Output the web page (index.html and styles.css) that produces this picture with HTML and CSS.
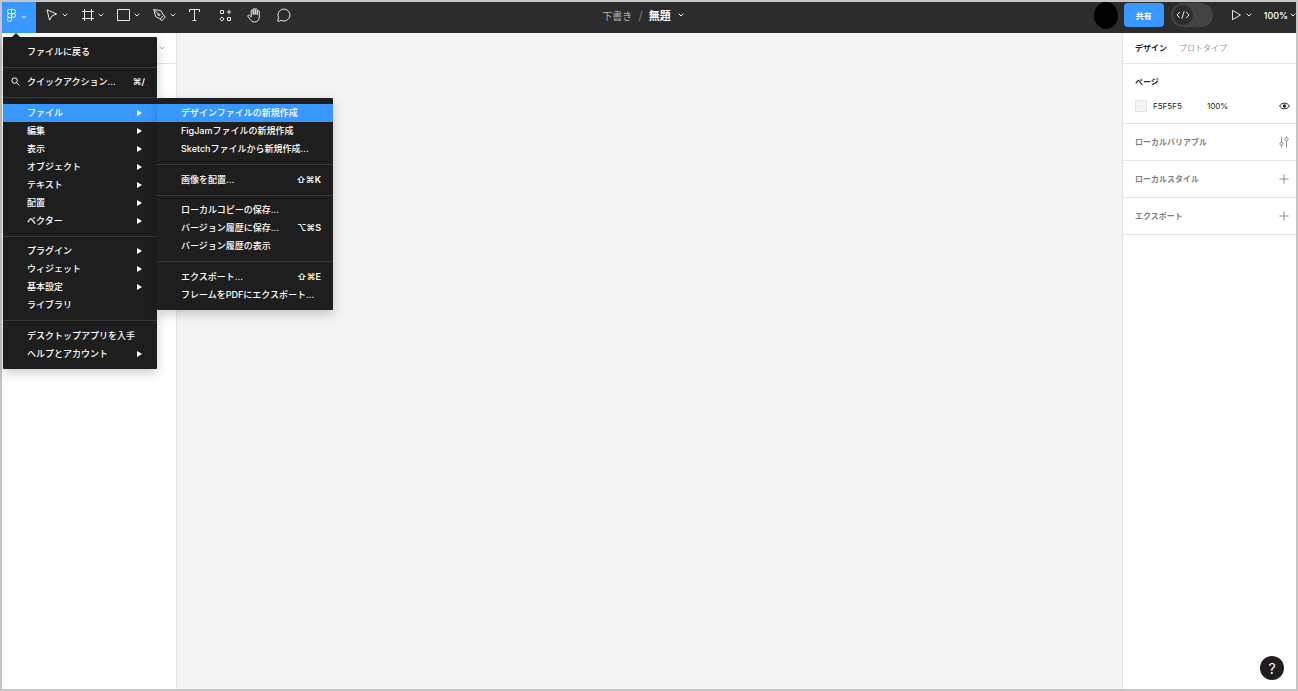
FILE: index.html
```html
<!DOCTYPE html>
<html lang="ja">
<head>
    <meta charset="UTF-8">
    <meta name="viewport" content="width=device-width, initial-scale=1.0">
    <title>無題 – Figma</title>
    <link rel="stylesheet" href="styles.css">
</head>
<body>

    <!-- Shared chevron -->
    <svg class="defs" aria-hidden="true">
        <symbol id="chevron" viewBox="0 0 6 4"><path d="M0.7 0.7 L3 3 L5.3 0.7" fill="none" stroke="currentColor"/></symbol>
        <symbol id="plus" viewBox="0 0 10 10"><path d="M5 0.5V9.5M0.5 5H9.5" fill="none" stroke="currentColor" stroke-width="0.9"/></symbol>
    </svg>

    <header class="toolbar">
        <div class="tools">
            <button class="logo" aria-label="メインメニュー" aria-expanded="true">
                <svg width="9" height="13" viewBox="0 0 9 13" fill="none" stroke="currentColor" stroke-width="0.9">
                    <path d="M4.5 0.5H2.4a1.9 1.9 0 0 0 0 4h2.1zM4.5 0.5h2.1a1.9 1.9 0 0 1 0 4H4.5zM4.5 4.5H2.4a1.9 1.9 0 0 0 0 4h2.1zM4.5 8.5H2.4a2 2 0 1 0 2.1 2z"/>
                    <circle cx="6.5" cy="6.5" r="2"/>
                </svg>
                <svg class="chevron" width="6" height="4"><use href="#chevron"/></svg>
            </button>
            <button class="tool" aria-label="移動">
                <svg width="16" height="16" viewBox="0 0 16 16" fill="none" stroke="currentColor"><path d="M3 2.8 L12.6 7 L8.2 8.8 L5.6 13.2 Z" stroke-linejoin="round"/></svg>
                <svg class="chevron" width="6" height="4"><use href="#chevron"/></svg>
            </button>
            <button class="tool" aria-label="フレーム">
                <svg width="16" height="16" viewBox="0 0 16 16" fill="none" stroke="currentColor"><path d="M4.5 2v12M11.5 2v12M2 4.5h12M2 11.5h12"/></svg>
                <svg class="chevron" width="6" height="4"><use href="#chevron"/></svg>
            </button>
            <button class="tool" aria-label="長方形">
                <svg width="16" height="16" viewBox="0 0 16 16" fill="none" stroke="currentColor"><path d="M1.5 2.5h12v11h-12z"/></svg>
                <svg class="chevron" width="6" height="4"><use href="#chevron"/></svg>
            </button>
            <button class="tool" aria-label="ペン">
                <svg width="16" height="16" viewBox="0 0 16 16" fill="none" stroke="currentColor" stroke-linejoin="round"><path d="M1.8 2.5 L8.8 3.6 L11.6 8.4 L8.2 12 L3.6 9.6 Z M1.8 2.5 L6.4 7.2 M8.2 12 l1.5 1.8 L13.4 9.8 L11.6 8.4"/><circle cx="7" cy="7.8" r="1"/></svg>
                <svg class="chevron" width="6" height="4"><use href="#chevron"/></svg>
            </button>
            <div class="single-tools">
                <button aria-label="テキスト">
                    <svg width="16" height="16" viewBox="0 0 16 16" fill="none" stroke="currentColor"><path d="M3.5 5V2.5h10V5M8.5 2.5v11M6.5 13.5h4"/></svg>
                </button>
                <button aria-label="リソース">
                    <svg width="16" height="16" viewBox="0 0 16 16" fill="none" stroke="currentColor"><path d="M4.5 3.5h3v3h-3zM11.5 10.5h3v3h-3zM13 2.8v4.4M10.8 5h4.4"/><path d="M6 9.9 L8.1 12 L6 14.1 L3.9 12 Z"/></svg>
                </button>
                <button aria-label="手のひら">
                    <svg width="16" height="16" viewBox="0 0 16 16" fill="none" stroke="currentColor" stroke-linecap="round" stroke-linejoin="round"><path d="M5.2 9.5V3.8a1 1 0 0 1 2 0V7.5V2.5a1 1 0 0 1 2 0V7.5V2.8a1 1 0 0 1 2 0V7.8V4.8a1 1 0 0 1 2.1 0V10c0 3-1.8 5-4.8 5-2.2 0-3.4-1-4.4-2.6L1.9 9.4c-.6-1 .7-1.9 1.5-1.1z"/></svg>
                </button>
                <button aria-label="コメント">
                    <svg width="16" height="16" viewBox="0 0 16 16" fill="none" stroke="currentColor" stroke-linejoin="round"><path d="M1.6 14.2 L2.6 10.8 A6 6 0 1 1 5.2 13.4 C4.2 14.1 2.8 14.2 1.6 14.2 Z"/></svg>
                </button>
            </div>
        </div>

        <div class="document">
            <a href="#drafts">下書き</a>
            <span class="slash">/</span>
            <button class="document-name">無題 <svg class="chevron" width="6" height="4"><use href="#chevron"/></svg></button>
        </div>

        <div class="actions">
            <span class="avatar"></span>
            <button class="share">共有</button>
            <label class="dev-mode">
                <input type="checkbox" aria-label="開発モード">
                <span class="knob">
                    <svg width="14" height="10" viewBox="0 0 14 10" fill="none" stroke="currentColor"><path d="M3.8 2 L1 5 L3.8 8 M10.2 2 L13 5 L10.2 8 M8.2 1.2 L5.8 8.8"/></svg>
                </span>
            </label>
            <button class="play" aria-label="プレゼンテーション">
                <svg width="11" height="12" viewBox="0 0 11 12" fill="none" stroke="currentColor"><path d="M1.5 1.3 L9.4 6 L1.5 10.7 Z" stroke-linejoin="round"/></svg>
                <svg class="chevron" width="6" height="4"><use href="#chevron"/></svg>
            </button>
            <button class="zoom">100% <svg class="chevron" width="6" height="4"><use href="#chevron"/></svg></button>
        </div>
    </header>

    <main class="workspace">
        <aside class="layers">
            <div class="layers-header">
                <svg class="chevron" width="6" height="4"><use href="#chevron"/></svg>
            </div>
        </aside>

        <section class="canvas"></section>

        <aside class="inspector">
            <div class="tabs">
                <button class="tab active">デザイン</button>
                <button class="tab">プロトタイプ</button>
            </div>
            <div class="page-section">
                <h2>ページ</h2>
                <div class="page-color">
                    <button class="swatch" aria-label="背景色"></button>
                    <input class="hex" type="text" value="F5F5F5" aria-label="カラーコード">
                    <input class="opacity" type="text" value="100%" aria-label="不透明度">
                    <button class="eye" aria-label="表示切り替え">
                        <svg width="11" height="8" viewBox="0 0 11 8" fill="none" stroke="currentColor"><path d="M0.7 4 C2.6 0.2 8.4 0.2 10.3 4 C8.4 7.8 2.6 7.8 0.7 4 Z"/><circle cx="5.5" cy="4" r="1.7" fill="currentColor" stroke="none"/></svg>
                    </button>
                </div>
            </div>
            <div class="row">
                <h3>ローカルバリアブル</h3>
                <button aria-label="バリアブル">
                    <svg width="10" height="12" viewBox="0 0 10 12" fill="none" stroke="currentColor" stroke-width="0.9"><path d="M2.5 1v5M2.5 9.5v2M7.5 5.2v6.3M7.5 0.5v1"/><circle cx="2.5" cy="7.8" r="1.6"/><circle cx="7.5" cy="3.2" r="1.6"/></svg>
                </button>
            </div>
            <div class="row">
                <h3>ローカルスタイル</h3>
                <button aria-label="スタイルを追加"><svg width="10" height="10"><use href="#plus"/></svg></button>
            </div>
            <div class="row">
                <h3>エクスポート</h3>
                <button aria-label="エクスポートを追加"><svg width="10" height="10"><use href="#plus"/></svg></button>
            </div>
        </aside>
    </main>

    <!-- Main menu -->
    <nav class="menu main-menu">
        <div class="menu-section">
            <button class="item">ファイルに戻る</button>
        </div>
        <div class="menu-section compact">
            <button class="item">
                <svg class="search" width="9" height="9" viewBox="0 0 9 9" fill="none" stroke="currentColor"><circle cx="3.6" cy="3.6" r="2.7"/><path d="M5.6 5.6 L8.4 8.4"/></svg>
                クイックアクション...<kbd>⌘/</kbd>
            </button>
        </div>
        <div class="menu-section">
            <button class="item parent selected">ファイル</button>
            <button class="item parent">編集</button>
            <button class="item parent">表示</button>
            <button class="item parent">オブジェクト</button>
            <button class="item parent">テキスト</button>
            <button class="item parent">配置</button>
            <button class="item parent">ベクター</button>
        </div>
        <div class="menu-section compact">
            <button class="item parent">プラグイン</button>
            <button class="item parent">ウィジェット</button>
            <button class="item parent">基本設定</button>
            <button class="item">ライブラリ</button>
        </div>
        <div class="menu-section">
            <button class="item">デスクトップアプリを入手</button>
            <button class="item parent">ヘルプとアカウント</button>
        </div>
    </nav>

    <!-- File submenu -->
    <nav class="menu file-menu">
        <div class="menu-section">
            <button class="item selected">デザインファイルの新規作成</button>
            <button class="item">FigJamファイルの新規作成</button>
            <button class="item">Sketchファイルから新規作成...</button>
        </div>
        <div class="menu-section">
            <button class="item">画像を配置...<kbd>⇧⌘K</kbd></button>
        </div>
        <div class="menu-section compact">
            <button class="item">ローカルコピーの保存...</button>
            <button class="item">バージョン履歴に保存...<kbd>⌥⌘S</kbd></button>
            <button class="item">バージョン履歴の表示</button>
        </div>
        <div class="menu-section">
            <button class="item">エクスポート...<kbd>⇧⌘E</kbd></button>
            <button class="item">フレームをPDFにエクスポート...</button>
        </div>
    </nav>

    <button class="help" aria-label="ヘルプ">?</button>

</body>
</html>
```
FILE: styles.css
```css
* {
    box-sizing: border-box;
}

body {
    margin: 0;
    height: 100vh;
    display: flex;
    flex-direction: column;
    border: 2px solid #c5c5c5;
    background-color: #fff;
    color: #222;
    font-family: Inter, "Noto Sans CJK JP", sans-serif;
    font-size: 9px;
    overflow: hidden;
}

button,
input {
    margin: 0;
    padding: 0;
    border: 0;
    background: none;
    color: inherit;
    font: inherit;
}

button {
    display: flex;
    align-items: center;
}

h2,
h3 {
    margin: 0;
    font-size: 8px;
    font-weight: 600;
}

svg {
    display: block;
    flex: none;
}

.defs {
    position: absolute;
    width: 0;
    height: 0;
}

/* Toolbar */
.toolbar {
    display: grid;
    grid-template-columns: 1fr auto 1fr;
    grid-template-rows: 100%;
    height: 31px;
    flex: none;
    background-color: #2c2c2c;
    color: #e6e6e6;
}

.tools {
    display: flex;
}

.logo {
    width: 34px;
    padding: 0 0 5px 5px;
    margin-right: 6px;
    gap: 5px;
    background-color: #3898ff;
    color: #fff;
}

.logo .chevron {
    margin-top: 4px;
}

.tool {
    width: 36px;
    padding: 0 0 5px 2px;
    gap: 2px;
}

.single-tools {
    display: flex;
    gap: 14px;
    padding-bottom: 5px;
}

.document {
    display: flex;
    align-items: center;
    gap: 6px;
    padding: 0 12px 5px 0;
    font-size: 10px;
}

.document a {
    color: #b3b3b3;
    text-decoration: none;
}

.slash {
    color: #777;
    font-size: 12px;
}

.document-name {
    gap: 7px;
    color: #fff;
    font-size: 11px;
    font-weight: 600;
}

.actions {
    display: flex;
    align-items: center;
    justify-content: flex-end;
    padding-bottom: 5px;
}

.avatar {
    width: 24px;
    height: 27px;
    margin-right: 6px;
    border-radius: 50%;
    background-color: #000;
}

.share {
    width: 40px;
    height: 24px;
    margin-right: 7px;
    justify-content: center;
    border-radius: 4px;
    background-color: #3898ff;
    color: #fff;
    font-size: 8px;
    font-weight: 600;
}

.dev-mode {
    width: 42px;
    height: 24px;
    padding: 2px;
    margin-right: 18px;
    border-radius: 12px;
    background-color: #444;
}

.dev-mode input {
    position: absolute;
    opacity: 0;
}

.knob {
    display: flex;
    align-items: center;
    justify-content: center;
    width: 20px;
    height: 20px;
    border-radius: 50%;
    background-color: #2c2c2c;
}

.play {
    gap: 4px;
    margin-right: 12px;
}

.zoom {
    gap: 2px;
    font-weight: 500;
    color: #fff;
}

/* Workspace */
.workspace {
    flex: 1;
    display: flex;
    min-height: 0;
}

.layers {
    width: 175px;
    border-right: 1px solid #e5e5e5;
}

.layers-header {
    display: flex;
    align-items: center;
    justify-content: flex-end;
    height: 31px;
    padding-right: 11px;
    border-bottom: 1px solid #e5e5e5;
    color: #b3b3b3;
}

.canvas {
    flex: 1;
    background-color: #f4f4f4;
}

.inspector {
    width: 174px;
    border-left: 1px solid #e5e5e5;
}

.tabs {
    display: flex;
    gap: 12px;
    height: 31px;
    padding: 0 0 2px 12px;
    border-bottom: 1px solid #e5e5e5;
}

.tab {
    color: #999;
    font-size: 8px;
}

.tab.active {
    color: #222;
    font-weight: 600;
}

.page-section {
    height: 60px;
    padding: 12px 6px 0 12px;
    border-bottom: 1px solid #e5e5e5;
}

.page-section h2 {
    line-height: 12px;
}

.page-color {
    display: flex;
    align-items: center;
    margin-top: 12px;
    font-size: 8px;
}

.swatch {
    width: 12px;
    height: 12px;
    margin-right: 6px;
    border: 1px solid #e2e2e2;
    background-color: #f5f5f5;
}

.hex {
    width: 54px;
}

.opacity {
    width: 40px;
}

.eye {
    margin-left: auto;
}

.row {
    display: flex;
    align-items: center;
    justify-content: space-between;
    height: 37px;
    padding: 0 7px 1px 12px;
    border-bottom: 1px solid #e5e5e5;
    color: #808080;
}

/* Menus */
.menu {
    position: absolute;
    background-color: #1e1e1e;
    color: #fff;
    border-radius: 1px;
    box-shadow: 0 4px 12px rgba(0, 0, 0, 0.2);
}

.main-menu {
    top: 37px;
    left: 3px;
    width: 154px;
}

.main-menu::before {
    content: "";
    position: absolute;
    top: -4px;
    left: 9px;
    border: 4px solid transparent;
    border-top: 0;
    border-bottom-color: #1e1e1e;
}

.file-menu {
    top: 98px;
    left: 157px;
    width: 176px;
}

.menu-section {
    padding: 6px 0;
}

.menu-section.compact {
    padding-top: 5px;
}

.menu-section + .menu-section {
    border-top: 1px solid #383838;
}

.item {
    position: relative;
    width: 100%;
    height: 18px;
    padding: 0 12px 1px 24px;
    font-weight: 500;
    white-space: nowrap;
}

.item.selected {
    background-color: #3898ff;
}

.item.parent::after {
    content: "";
    margin-left: auto;
    margin-right: 3px;
    border: 3px solid transparent;
    border-left: 5px solid #fff;
    border-right: 0;
}

.item kbd {
    margin-left: auto;
    font-family: Inter, "DejaVu Sans", sans-serif;
    font-weight: 600;
}

.search {
    position: absolute;
    left: 8px;
}

.help {
    position: absolute;
    right: 14px;
    bottom: 11px;
    width: 24px;
    height: 24px;
    justify-content: center;
    border-radius: 50%;
    background-color: #1e1e1e;
    color: #fff;
    font-size: 14px;
}
```
